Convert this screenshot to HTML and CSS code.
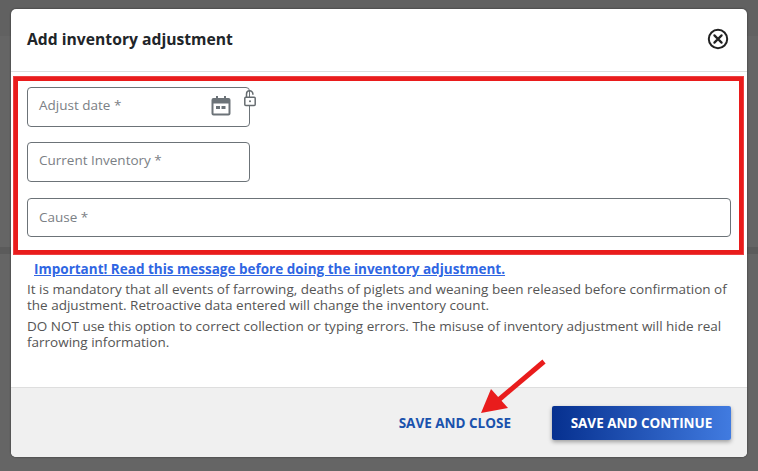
FILE: index.html

```html
<!DOCTYPE html>
<html lang="en">
<head>
    <meta charset="UTF-8">
    <meta name="viewport" content="width=device-width, initial-scale=1.0">
    <title>Add inventory adjustment</title>
    <link rel="stylesheet" href="styles.css">
</head>
<body>
    <div class="modal">
        <div class="modal-header">
            <h2 class="modal-title">Add inventory adjustment</h2>
            <svg class="close-icon" width="22" height="22" viewBox="0 0 22 22" fill="none" stroke="#222" stroke-linecap="round">
                <circle cx="11" cy="11" r="9.200" stroke-width="2"/>
                <path d="M7.400 7.400l7.200 7.200M14.600 7.400l-7.200 7.200" stroke-width="2.200"/>
            </svg>
        </div>

        <div class="highlight-box">
            <div class="field field-small">
                <span class="field-label">Adjust date *</span>
                <svg class="calendar-icon" width="20" height="20" viewBox="0 0 20 20">
                    <path fill="#6c7378" fill-rule="evenodd" d="M5 0h2v2h6V0h2v2h2.500A2 2 0 0 1 19.500 4v13.500a2 2 0 0 1-2 2h-15a2 2 0 0 1-2-2V4a2 2 0 0 1 2-2H5zM2.500 7.500v10h15v-10zM5 10h4v3H5zm5.500 0h4v3h-4z"/>
                </svg>
                <svg class="lock-icon" width="14" height="17" viewBox="0 0 14 17" fill="none" stroke="#666c70" stroke-width="1.500">
                    <path d="M3.500 7V4a3.200 3.200 0 0 1 6.400 0v.8"/>
                    <rect x="1.800" y="7.200" width="10.400" height="8.300" rx="1" fill="#fff"/>
                    <circle cx="7" cy="11.300" r="1" fill="#666c70" stroke="none"/>
                </svg>
            </div>
            <div class="field field-small">
                <span class="field-label">Current Inventory *</span>
            </div>
            <div class="field field-wide">
                <span class="field-label">Cause *</span>
            </div>
        </div>

        <div class="modal-body">
            <a class="warning-link" href="#">Important! Read this message before doing the inventory adjustment.</a>
            <p>It is mandatory that all events of farrowing, deaths of piglets and weaning been released before confirmation of the adjustment. Retroactive data entered will change the inventory count.</p>
            <p>DO NOT use this option to correct collection or typing errors. The misuse of inventory adjustment will hide real farrowing information.</p>
        </div>

        <div class="modal-footer">
            <button class="btn-link" type="button">SAVE AND CLOSE</button>
            <button class="btn-primary" type="button">SAVE AND CONTINUE</button>
        </div>

        <!-- annotation arrow on top of the footer -->
        <svg class="arrow" width="70" height="60" viewBox="0 0 70 60">
            <path d="M64 3.500L15 45" stroke="#e91c1c" stroke-width="5" fill="none"/>
            <path d="M1 55L11 31L28 50z" fill="#e91c1c"/>
        </svg>
    </div>
</body>
</html>
```

FILE: styles.css

```css
body {
    margin: 0;
    height: 471px;
    overflow: hidden;
    font-family: "Open Sans", sans-serif;
    /* page behind the overlay shows through as faint bands */
    background: linear-gradient(to bottom, #616161 0, #616161 36px, #656565 36px, #656565 247px, #5b5b5b 247px, #5b5b5b 254px, #656565 254px);
}

.modal {
    position: relative;
    display: flex;
    flex-direction: column;
    box-sizing: border-box;
    width: 736px;
    height: 448px;
    margin: 9px 0 0 11px;
    background: #fff;
    border-radius: 5px;
    overflow: hidden;
    box-shadow: 0 0 2px rgba(0, 0, 0, 0.6);
}

.modal-header {
    display: flex;
    align-items: center;
    justify-content: space-between;
    box-sizing: border-box;
    height: 63px;
    padding: 0 18px 2px 16px;
    border-bottom: 1px solid #dedede;
}

.modal-title {
    margin: 0;
    font-size: 15.700px;
    font-weight: 700;
    color: #212529;
}

.close-icon {
    display: block;
}

/* red annotation round the form fields */
.highlight-box {
    display: flex;
    flex-direction: column;
    gap: 15px;
    box-sizing: border-box;
    height: 177px;
    margin: 5px 4px 0 3px;
    padding: 6px 8px 0 9px;
    border: 4px solid #e91c1c;
    box-shadow: 0 0 0 1px #ec3f41;
}

.field {
    position: relative;
    display: flex;
    align-items: center;
    box-sizing: border-box;
    height: 40px;
    padding: 0 11px 4px;
    border: 1px solid #6c7378;
    border-radius: 4px;
}

.field-small {
    width: 223px;
}

.field-wide {
    margin-top: 1px;
    height: 39px;
    padding-bottom: 2px;
}

.field-label {
    font-size: 13.500px;
    color: #7b8085;
}

.calendar-icon {
    position: absolute;
    top: 8px;
    right: 18px;
}

.lock-icon {
    position: absolute;
    top: 2px;
    right: -8px;
}

.modal-body {
    flex: 1;
    padding: 6px 16px 0;
    font-size: 13.500px;
    line-height: 16px;
    color: #555;
}

.modal-body p {
    margin: 0 0 5px;
}

.warning-link {
    display: block;
    margin: 0 0 2px 7px;
    font-weight: 700;
    line-height: 19px;
    color: #2f66e3;
}

.modal-footer {
    display: flex;
    align-items: center;
    justify-content: flex-end;
    gap: 41px;
    box-sizing: border-box;
    height: 70px;
    padding: 1px 16px 0;
    background: #f0f0f0;
    border-top: 1px solid #dedede;
}

.modal-footer button {
    font-family: "Open Sans", sans-serif;
    font-size: 13.500px;
    font-weight: 700;
    border: none;
    padding: 0;
}

.btn-link {
    background: none;
    color: #1a52ad;
}

.btn-primary {
    width: 179px;
    height: 34px;
    color: #fff;
    background: linear-gradient(to right, #06308f, #417be0);
    border-radius: 2px;
    box-shadow: 0 2px 4px rgba(0, 0, 0, 0.35);
}

.arrow {
    position: absolute;
    top: 349px;
    left: 469px;
}
```
